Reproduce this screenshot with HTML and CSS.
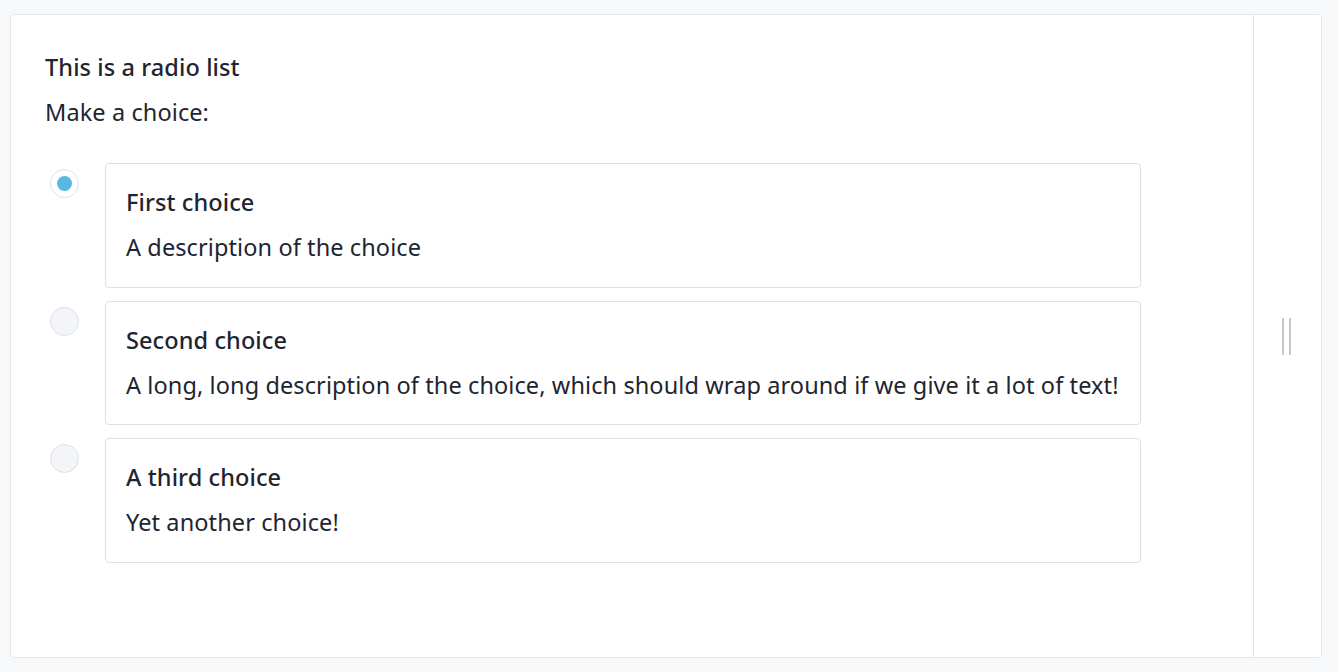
FILE: index.html
```html
<!DOCTYPE html>
<html lang="en">
<head>
<meta charset="utf-8">
<title>Radio list</title>
<link rel="stylesheet" href="styles.css">
</head>
<body>
<div class="frame">
  <main class="content">
    <p class="label">This is a radio list</p>
    <p class="prompt">Make a choice:</p>
    <div class="choices" role="radiogroup">
      <div class="choice">
        <span class="radio checked"><span class="dot"></span></span>
        <div class="card">
          <div class="title">First choice</div>
          <div class="desc">A description of the choice</div>
        </div>
      </div>
      <div class="choice">
        <span class="radio"></span>
        <div class="card">
          <div class="title">Second choice</div>
          <div class="desc">A long, long description of the choice, which should wrap around if we give it a lot of text!</div>
        </div>
      </div>
      <div class="choice">
        <span class="radio"></span>
        <div class="card">
          <div class="title">A third choice</div>
          <div class="desc">Yet another choice!</div>
        </div>
      </div>
    </div>
  </main>
  <aside class="handle-panel">
    <span class="handle"></span>
  </aside>
</div>
</body>
</html>
```

FILE: styles.css
```css
* { box-sizing: border-box; }
html, body { margin: 0; height: 100%; }
body {
  background: #f7f8fa;
  padding: 14px 16px 14px 10px;
  font-family: "Noto Sans", "Open Sans", sans-serif;
  color: #1e2530;
}
.frame {
  height: 644px;
  display: flex;
  background: #fff;
  border: 1px solid #e3e5e8;
  border-radius: 4px;
}
.content {
  flex: 1;
  padding: 30px 0 0 34px;
}
.label, .prompt {
  margin: 0;
  font-size: 23.5px;
  line-height: 45px;
  letter-spacing: 0.1px;
}
.label { font-weight: 500; }
.choices {
  width: 1096px;
  margin-top: 28px;
  display: flex;
  flex-direction: column;
  gap: 13px;
}
.choice {
  display: flex;
  align-items: flex-start;
}
.radio {
  flex: none;
  width: 29px;
  height: 29px;
  margin: 6px 26px 0 5px;
  border-radius: 50%;
  border: 1px solid #dde1e6;
  background: #f3f5f8;
  display: flex;
  align-items: center;
  justify-content: center;
}
.radio.checked { background: #fff; }
.dot {
  width: 15px;
  height: 15px;
  border-radius: 50%;
  background: #56b9e2;
}
.card {
  flex: 1;
  border: 1px solid #dde1e6;
  border-radius: 4px;
  padding: 16px 20px 16.5px 20px;
  font-size: 23.5px;
  line-height: 45px;
  letter-spacing: 0.1px;
}
.title { font-weight: 500; }
.handle-panel {
  width: 68px;
  border-left: 1px solid #e3e5e8;
  display: flex;
  align-items: center;
  justify-content: center;
}
.handle {
  width: 9px;
  height: 37px;
  border-left: 2px solid #c6c6c6;
  border-right: 2px solid #c6c6c6;
  margin-left: -2px;
}
```
